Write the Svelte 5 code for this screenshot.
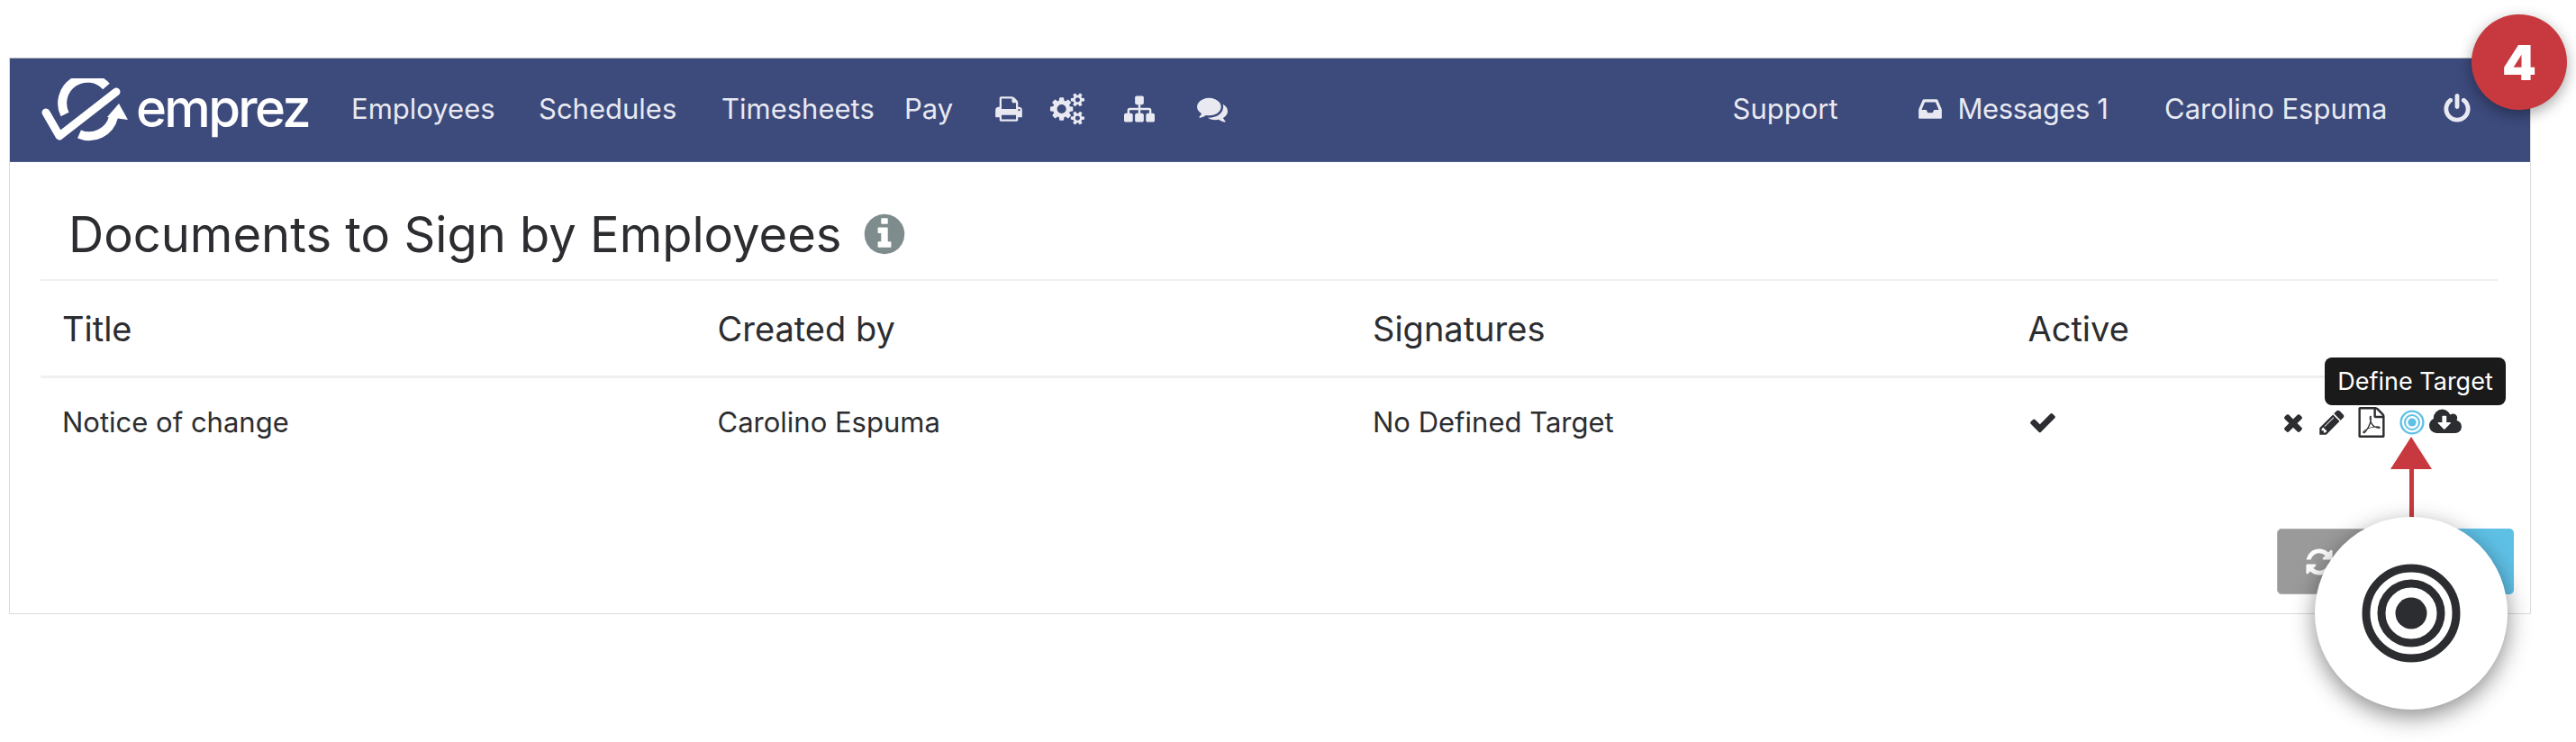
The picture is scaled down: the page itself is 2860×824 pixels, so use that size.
<script>
  const paths = {
    times: ["0 0 1792 1792","M1490 1322q0 40-28 68l-136 136q-28 28-68 28t-68-28l-294-294-294 294q-28 28-68 28t-68-28l-136-136q-28-28-28-68t28-68l294-294-294-294q-28-28-28-68t28-68l136-136q28-28 68-28t68 28l294 294 294-294q28-28 68-28t68 28l136 136q28 28 28 68t-28 68l-294 294 294 294q28 28 28 68z"],
    check: ["0 0 1792 1792","M1671 566q0 40-28 68l-724 724-136 136q-28 28-68 28t-68-28l-136-136-362-362q-28-28-28-68t28-68l136-136q28-28 68-28t68 28l294 295 656-657q28-28 68-28t68 28l136 136q28 28 28 68z"],
    pencil: ["0 0 1792 1792","M491 1536l91-91-235-235-91 91v107h128v128h107zm523-928q0-22-22-22-10 0-17 7l-542 542q-7 7-7 17 0 22 22 22 10 0 17-7l542-542q7-7 7-17zm-54-192l416 416-832 832h-416v-416zm683 96q0 53-37 90l-166 166-416-416 166-165q36-38 90-38 53 0 91 38l235 234q37 39 37 91z"],
    info: ["0 0 1792 1792","M1152 1376v-160q0-14-9-23t-23-9h-96v-512q0-14-9-23t-23-9h-320q-14 0-23 9t-9 23v160q0 14 9 23t23 9h96v320h-96q-14 0-23 9t-9 23v160q0 14 9 23t23 9h448q14 0 23-9t9-23zm-128-896v-160q0-14-9-23t-23-9h-192q-14 0-23 9t-9 23v160q0 14 9 23t23 9h192q14 0 23-9t9-23zm640 416q0 209-103 385.500t-279.500 279.500-385.500 103-385.500-103-279.500-279.500-103-385.500 103-385.500 279.500-279.500 385.500-103 385.500 103 279.500 279.500 103 385.500z"],
    power: ["0 0 1792 1792","M1664 896q0 156-61 298t-164 245-245 164-298 61-298-61-245-164-164-245-61-298q0-182 80.500-343t226.500-270q43-32 95.500-25t83.500 50q32 42 24.500 94.500t-49.500 84.500q-98 74-151.500 181t-53.500 228q0 104 40.500 198.500t109.500 163.500 163.500 109.500 198.500 40.500 198.500-40.500 163.500-109.500 109.500-163.500 40.500-198.500q0-121-53.500-228t-151.500-181q-42-32-49.500-84.500t24.500-94.500q31-43 84-50t95 25q146 109 226.500 270t80.500 343zm-640-768v640q0 52-38 90t-90 38-90-38-38-90v-640q0-52 38-90t90-38 90 38 38 90z"],
    print: ["0 0 1792 1792","M448 1536h896v-256h-896v256zm0-640h896v-384h-160q-40 0-68-28t-28-68v-160h-640v640zm1152 64q0-26-19-45t-45-19-45 19-19 45 19 45 45 19 45-19 19-45zm128 0v416q0 13-9.500 22.500t-22.500 9.500h-224v160q0 40-28 68t-68 28h-960q-40 0-68-28t-28-68v-160h-224q-13 0-22.500-9.500t-9.500-22.500v-416q0-79 56.500-135.500t135.500-56.500h64v-544q0-40 28-68t68-28h672q40 0 88 20t76 48l152 152q28 28 48 76t20 88v256h64q79 0 135.500 56.500t56.500 135.500z"],
    inbox: ["0 0 1792 1792","M1151 960h316q-1-3-2.500-8.500t-2.500-7.500l-212-496h-708l-212 496q-1 3-2.500 8.500t-2.500 7.500h316l95 192h320zm513 30v482q0 26-19 45t-45 19h-1408q-26 0-45-19t-19-45v-482q0-62 25-123l238-552q10-25 36.500-42t52.500-17h832q26 0 52.500 17t36.500 42l238 552q25 61 25 123z"],
    sitemap: ["0 0 1792 1792","M1792 1248v320q0 40-28 68t-68 28h-320q-40 0-68-28t-28-68v-320q0-40 28-68t68-28h96v-192h-512v192h96q40 0 68 28t28 68v320q0 40-28 68t-68 28h-320q-40 0-68-28t-28-68v-320q0-40 28-68t68-28h96v-192h-512v192h96q40 0 68 28t28 68v320q0 40-28 68t-68 28h-320q-40 0-68-28t-28-68v-320q0-40 28-68t68-28h96v-192q0-52 38-90t90-38h512v-192h-96q-40 0-68-28t-28-68v-320q0-40 28-68t68-28h320q40 0 68 28t28 68v320q0 40-28 68t-68 28h-96v192h512q52 0 90 38t38 90v192h96q40 0 68 28t28 68z"],
    comments: ["0 0 1792 1792","M1408 768q0 139-94 257t-256.500 186.500-353.500 68.500q-86 0-176-16-124 88-278 128-36 9-86 16h-3q-11 0-20.500-8t-11.500-21q-1-3-1-6.500t.5-6.500 2-6l2.500-5 3.500-5.500 4-5 4.500-5 4-4.500q5-6 23-25t26-29.500 22.500-29 25-38.500 20.500-44q-124-72-195-177t-71-224q0-139 94-257t256.500-186.500 353.500-68.500 353.500 68.500 256.500 186.500 94 257zm384 256q0 120-71 224.500t-195 176.500q10 24 20.500 44t25 38.500 22.500 29 26 29.500 23 25q1 1 4 4.500t4.500 5 4 5 3.500 5.500l2.500 5 2 6 .5 6.500-1 6.500q-3 14-13 22t-22 7q-50-7-86-16-154-40-278-128-90 16-176 16-271 0-472-132 58 4 88 4 161 0 309-45t264-129q125-92 192-212t67-254q0-77-23-152 129 71 204 178t75 230z"],
    refresh: ["0 0 1792 1792","M1639 1056q0 5-1 7-64 268-268 434.500t-478 166.500q-146 0-282.500-55t-243.500-157l-129 129q-19 19-45 19t-45-19-19-45v-448q0-26 19-45t45-19h448q26 0 45 19t19 45-19 45l-137 137q71 66 161 102t187 36q134 0 250-65t186-179q11-17 53-117 8-23 30-23h192q13 0 22.500 9.500t9.500 22.500zm25-800v448q0 26-19 45t-45 19h-448q-26 0-45-19t-19-45 19-45l138-138q-148-137-349-137-134 0-250 65t-186 179q-11 17-53 117-8 23-30 23h-199q-13 0-22.500-9.500t-9.500-22.500v-7q65-268 270-434.500t480-166.500q146 0 284 55.500t245 156.500l130-129q19-19 45-19t45 19 19 45z"],
    cloud: ["0 0 1920 1792","M1280 928q0-14-9-23t-23-9h-224v-352q0-13-9.500-22.500t-22.500-9.500h-192q-13 0-22.500 9.500t-9.500 22.500v352h-224q-13 0-22.500 9.500t-9.500 22.500q0 14 9 23l352 352q9 9 23 9t23-9l351-351q10-12 10-24zm640 224q0 159-112.500 271.500t-271.500 112.500h-1088q-185 0-316.500-131.500t-131.500-316.500q0-130 70-240t188-165q-2-30-2-43 0-212 150-362t362-150q156 0 285.500 87t188.500 231q71-62 166-62 106 0 181 75t75 181q0 76-41 138 130 31 213.500 135.500t83.500 238.500z"],
    pdf: ["0 0 1792 1792","M1596 380q28 28 48 76t20 88v1152q0 40-28 68t-68 28h-1344q-40 0-68-28t-28-68v-1600q0-40 28-68t68-28h896q40 0 88 20t76 48zm-444-244v376h376q-10-29-22-41l-313-313q-12-12-41-22zm384 1528v-1024h-416q-40 0-68-28t-28-68v-416h-768v1536h1280zm-514-593q33 26 84 56 59-7 117-7 147 0 177 49 16 22 2 52 0 1-1 2l-2 2v1q-6 38-71 38-48 0-115-20t-130-53q-221 24-392 83-153 262-242 262-15 0-28-7l-24-12q-1-1-6-5-10-10-6-36 9-40 56-91.500t132-96.500q14-9 23 6 2 2 2 4 52-85 107-197 68-136 104-262-24-82-30.500-159.500t6.500-127.500q11-40 42-40h22q23 0 35 15 18 21 9 68-2 6-4 8 1 3 1 8v30q-2 123-14 192 55 164 146 238zm-576 411q52-24 137-158-51 40-87.500 84t-49.500 74zm398-920q-15 42-2 132 1-7 7-44 0-3 7-43 1-4 4-8-1-1-1-2-1-2-1-3-1-22-13-36 0 1-1 2v2zm-124 661q135-54 284-81-2-1-13-9.500t-16-13.500q-76-67-127-176-27 86-83 197-30 56-45 83zm646-16q-24-24-140-24 76 28 124 28 14 0 18-1 0-1-2-3z"],
    cogs: ["0 0 1920 1792","M896 896q0-106-75-181t-181-75-181 75-75 181 75 181 181 75 181-75 75-181zm768 512q0-52-38-90t-90-38-90 38-38 90q0 53 37.500 90.500t90.500 37.500 90.500-37.500 37.500-90.500zm0-1024q0-52-38-90t-90-38-90 38-38 90q0 53 37.500 90.500t90.500 37.500 90.500-37.500 37.500-90.500zm-384 421v185q0 10-7 19.500t-16 10.500l-155 24q-11 35-32 76 34 48 90 115 7 11 7 20 0 12-7 19-23 30-82.500 89.500t-78.500 59.500q-11 0-21-7l-115-90q-37 19-77 31-11 108-23 155-7 24-30 24h-186q-11 0-20-7.500t-10-17.500l-23-153q-34-10-75-31l-118 89q-7 7-20 7-11 0-21-8-144-133-144-160 0-9 7-19 10-14 41-53t47-61q-23-44-35-82l-152-24q-10-1-17-9.500t-7-19.500v-185q0-10 7-19.500t16-10.500l155-24q11-35 32-76-34-48-90-115-7-11-7-20 0-12 7-20 22-30 82-89t79-59q11 0 21 7l115 90q34-18 77-32 11-108 23-154 7-24 30-24h186q11 0 20 7.500t10 17.500l23 153q34 10 75 31l118-89q8-7 20-7 11 0 21 8 144 133 144 160 0 8-7 19-12 16-42 54t-45 60q23 48 34 82l152 23q10 2 17 10.500t7 19.500zm640 533v140q0 16-149 31-12 27-30 52 51 113 51 138 0 4-4 7-122 71-124 71-8 0-46-47t-52-68q-20 2-30 2t-30-2q-14 21-52 68t-46 47q-2 0-124-71-4-3-4-7 0-25 51-138-18-25-30-52-149-15-149-31v-140q0-16 149-31 13-29 30-52-51-113-51-138 0-4 4-7 4-2 35-20t59-34 30-16q8 0 46 46.500t52 67.500q20-2 30-2t30 2q51-71 92-112l6-2q4 0 124 70 4 3 4 7 0 25-51 138 17 23 30 52 149 15 149 31zm0-1024v140q0 16-149 31-12 27-30 52 51 113 51 138 0 4-4 7-122 71-124 71-8 0-46-47t-52-68q-20 2-30 2t-30-2q-14 21-52 68t-46 47q-2 0-124-71-4-3-4-7 0-25 51-138-18-25-30-52-149-15-149-31v-140q0-16 149-31 13-29 30-52-51-113-51-138 0-4 4-7 4-2 35-20t59-34 30-16q8 0 46 46.500t52 67.500q20-2 30-2t30 2q51-71 92-112l6-2q4 0 124 70 4 3 4 7 0 25-51 138 17 23 30 52 149 15 149 31z"]
  };
  const leftLinks = [
    { label: "Employees", cls: "l-emp" },
    { label: "Schedules", cls: "l-sch" },
    { label: "Timesheets", cls: "l-tim" },
    { label: "Pay", cls: "l-pay" }
  ];
  const columns = ["Title", "Created by", "Signatures", "Active"];
  const cells = ["Notice of change", "Carolino Espuma", "No Defined Target"];
</script>

{#snippet fa(name, cls)}
  <svg class={"fa " + cls} viewBox={paths[name][0]} aria-hidden="true"><path d={paths[name][1]} fill="currentColor" /></svg>
{/snippet}

<div class="page">
  <section class="card">
    <nav class="nav">
      <div class="brand">
        <svg class="mark" viewBox="0 0 100 72" aria-hidden="true">
          <path d="M27 40 A28 28 0 0 1 73 9" fill="none" stroke="currentColor" stroke-width="10" />
          <path d="M43 62 A28 28 0 0 0 81 43" fill="none" stroke="currentColor" stroke-width="10" />
          <path d="M74 43 L87 28 L97 46 Z" fill="currentColor" />
          <path d="M5 37 L21 64 L83 15" fill="none" stroke="#3c4a7c" stroke-width="18" stroke-linecap="butt" stroke-linejoin="miter" />
          <path d="M6 38 L21 64 L84 15" fill="none" stroke="currentColor" stroke-width="9" stroke-linecap="round" stroke-linejoin="round" />
        </svg>
        <span class="wordmark">emprez</span>
      </div>
      {#each leftLinks as l}
        <span class={"link " + l.cls}>{l.label}</span>
      {/each}
      {@render fa("print", "n-print")}
      {@render fa("cogs", "n-cogs")}
      {@render fa("sitemap", "n-site")}
      {@render fa("comments", "n-comm")}
      <span class="link l-sup">Support</span>
      {@render fa("inbox", "n-inbox")}
      <span class="link l-msg">Messages 1</span>
      <span class="link l-usr">Carolino Espuma</span>
      {@render fa("power", "n-power")}
    </nav>

    <div class="body">
      <header class="head">
        <h1>Documents to Sign by Employees</h1>
        {@render fa("info", "h-info")}
      </header>
      <div class="grid thead">
        {#each columns as c}<div>{c}</div>{/each}
      </div>
      <div class="grid trow">
        {#each cells as c}<div>{c}</div>{/each}
        <div class="active-cell">
          {@render fa("check", "r-check")}
          <div class="actions">
            {@render fa("times", "a-x")}
            {@render fa("pencil", "a-pen")}
            {@render fa("pdf", "a-pdf")}
            <svg class="a-target" viewBox="0 0 28 28" aria-hidden="true">
              <circle cx="14" cy="14" r="12.4" fill="none" stroke="#5fc0e6" stroke-width="2.4" />
              <circle cx="14" cy="14" r="8" fill="none" stroke="#5fc0e6" stroke-width="2" />
              <circle cx="14" cy="14" r="4.6" fill="#5fc0e6" />
            </svg>
            {@render fa("cloud", "a-cloud")}
          </div>
        </div>
      </div>
      <div class="footer">
        <div class="btn grey">{@render fa("refresh", "b-ref")}</div>
        <div class="btn blue"></div>
      </div>
    </div>
  </section>

  <div class="tip">Define Target</div>
  <div class="arrow-head"></div>
  <div class="arrow-shaft"></div>
  <div class="lens">
    <svg viewBox="0 0 110 110" aria-hidden="true">
      <circle cx="55" cy="55" r="50" fill="none" stroke="#2c2d30" stroke-width="9" />
      <circle cx="55" cy="55" r="33" fill="none" stroke="#2c2d30" stroke-width="9" />
      <circle cx="55" cy="55" r="17.500" fill="#2c2d30" />
    </svg>
  </div>
  <div class="badge">4</div>
</div>

<style>
  :global(body) { margin: 0; background: #fff; }
  .page {
    position: relative;
    width: 2860px;
    height: 824px;
    overflow: hidden;
    background: #fff;
    padding: 64px 50px 0 10px;
    box-sizing: border-box;
    font-family: Inter, "Noto Sans", sans-serif;
    color: #2c2d30;
  }
  .card {
    height: 618px;
    border: 1px solid #dcdcdc;
    border-top-color: #b5b5b5;
    box-sizing: border-box;
    background: #fff;
  }
  .nav {
    height: 115px;
    background: #3c4a7c;
    color: #e8e9f1;
    display: flex;
    align-items: center;
    padding-left: 34px;
    padding-bottom: 3px;
    border-bottom: 1px solid #52608f;
    box-sizing: border-box;
    font-size: 31px;
  }
  .fa { display: block; flex: none; }
  .brand { display: flex; align-items: center; color: #fff; width: 345px; flex: none; margin-top: 3px; }
  .mark { width: 100px; height: 72px; flex: none; margin-top: 2px; }
  .wordmark { font-size: 58px; font-weight: 500; letter-spacing: -2.7px; margin-left: 6px; margin-top: -4px; }
  .link { white-space: nowrap; flex: none; }
  .l-emp { width: 208px; }
  .l-sch { width: 203px; }
  .l-tim { width: 203px; }
  .l-pay { width: 100px; }
  .n-print { width: 32px; height: 32px; }
  .n-cogs { width: 38px; height: 36px; margin-left: 30px; }
  .n-site { width: 34px; height: 34px; margin-left: 44px; }
  .n-comm { width: 34px; height: 34px; margin-left: 47px; }
  .l-sup { margin-left: auto; width: 204.5px; }
  .n-inbox { width: 30px; height: 30px; margin-right: 15.500px; }
  .l-msg { width: 229.500px; letter-spacing: -0.4px; }
  .l-usr { width: 308px; }
  .n-power { width: 34px; height: 34px; margin-right: 64px; }

  .body { padding: 0 36px 0 34px; }
  .head {
    height: 132px;
    display: flex;
    align-items: center;
    gap: 21px;
    padding: 30px 0 0 31px;
    box-sizing: border-box;
    border-bottom: 2px solid #eff0f2;
  }
  h1 { margin: 0; font-size: 54.3px; font-weight: 400; line-height: 1; color: #2c2d30; }
  .h-info { width: 52px; height: 52px; color: #7f8c8d; }
  .grid {
    display: grid;
    grid-template-columns: repeat(4, 727.5px);
    padding-left: 24px;
    align-items: center;
  }
  .thead { height: 108px; font-size: 38px; font-weight: 400; border-bottom: 3px solid #eff0f2; box-sizing: border-box; }
  .trow { height: 100px; font-size: 31px; padding-bottom: 3px; box-sizing: border-box; }
  .active-cell { position: relative; }
  .r-check { width: 32px; height: 32px; }
  .actions {
    position: absolute;
    top: -3px;
    left: 279px;
    display: flex;
    align-items: center;
    height: 38px;
  }
  .a-x { width: 30px; height: 30px; }
  .a-pen { width: 32px; height: 32px; margin-left: 12px; }
  .a-pdf { width: 34px; height: 34px; margin-left: 11px; }
  .a-target { width: 28px; height: 28px; margin-left: 14px; display: block; }
  .a-cloud { width: 36px; height: 34px; margin-left: 5px; }

  .footer { display: flex; justify-content: flex-end; padding-top: 67px; margin-right: -18px; }
  .btn { height: 73px; border-radius: 5px; box-sizing: border-box; }
  .grey { width: 150px; background: #9a9a9a; border: 1px solid #b0b0b0; color: #fff; display: flex; align-items: center; padding-left: 29px; }
  .blue { width: 113px; background: #5fc0e6; }
  .b-ref { width: 34px; height: 34px; }

  .tip {
    position: absolute;
    left: 2581px;
    top: 397px;
    width: 201px;
    height: 53px;
    box-sizing: border-box;
    background: #1a1a1a;
    color: #fff;
    border-radius: 8px;
    font-size: 27px;
    display: flex;
    align-items: center;
    justify-content: center;
  }
  .arrow-head {
    position: absolute;
    left: 2654px;
    top: 485px;
    width: 0;
    height: 0;
    border-left: 23px solid transparent;
    border-right: 23px solid transparent;
    border-bottom: 36px solid #c8393f;
  }
  .arrow-shaft {
    position: absolute;
    left: 2675px;
    top: 520px;
    width: 5px;
    height: 56px;
    background: #c8393f;
  }
  .lens {
    position: absolute;
    left: 2570px;
    top: 574px;
    width: 214px;
    height: 214px;
    border-radius: 50%;
    background: #fff;
    box-shadow: 0 8px 26px rgba(0, 0, 0, 0.45);
    display: flex;
    align-items: center;
    justify-content: center;
  }
  .lens svg { width: 110px; height: 110px; display: block; }
  .badge {
    position: absolute;
    left: 2744px;
    top: 16px;
    width: 106px;
    height: 106px;
    border-radius: 50%;
    background: #c8393f;
    color: #fff;
    font-size: 54px;
    font-weight: 900;
    display: flex;
    align-items: center;
    justify-content: center;
    box-shadow: 0 5px 16px rgba(0, 0, 0, 0.35);
  }
</style>
